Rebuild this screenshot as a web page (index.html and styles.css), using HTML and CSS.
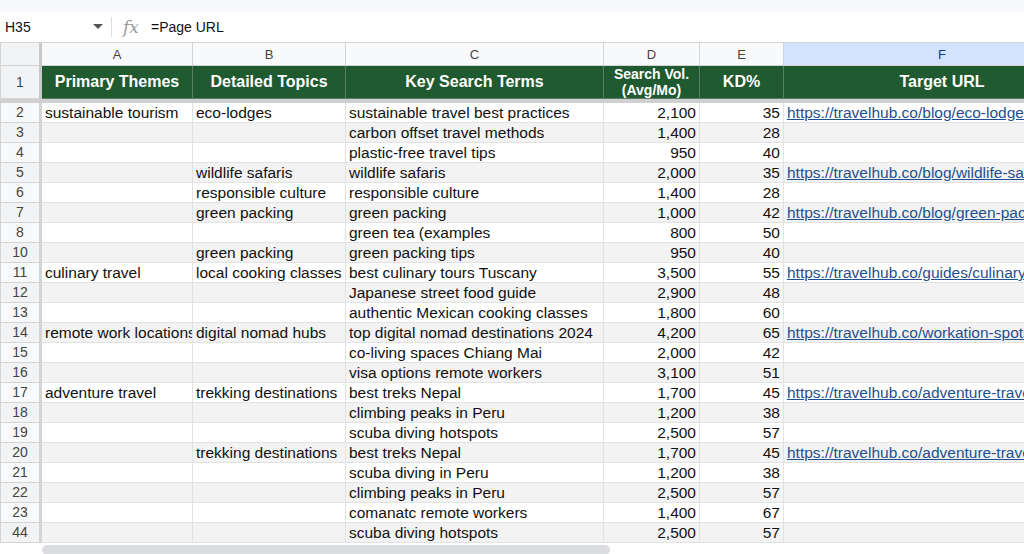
FILE: index.html
```html
<!DOCTYPE html>
<html>
<head>
  <link rel="stylesheet" href="styles.css">
</head>
<body>
  <div class="topstrip"></div>
  <div class="formula-bar">
    <div class="namebox">H35</div>
    <svg class="caret" width="10" height="6" viewBox="0 0 10 6"><path d="M0 0 L10 0 L5 5 Z" fill="#555"/></svg>
    <div class="divider"></div>
    <span class="fx">fx</span>
    <span class="formula">=Page URL</span>
  </div>
  <table class="sheet">
    <colgroup>
      <col class="c-num"><col class="c-a"><col class="c-b"><col class="c-c"><col class="c-d"><col class="c-e"><col class="c-f">
    </colgroup>
    <tr class="letters">
      <th class="corner"></th><th>A</th><th>B</th><th>C</th><th>D</th><th>E</th><th class="sel">F</th>
    </tr>
    <tr class="head">
      <td class="num">1</td>
      <td>Primary Themes</td>
      <td>Detailed Topics</td>
      <td>Key Search Terms</td>
      <td class="two">Search Vol.<br>(Avg/Mo)</td>
      <td>KD%</td>
      <td>Target URL</td>
    </tr>
  </table>
  <table class="sheet body">
    <colgroup>
      <col class="c-num"><col class="c-a"><col class="c-b"><col class="c-c"><col class="c-d"><col class="c-e"><col class="c-f">
    </colgroup>
    <tbody id="rows"></tbody>
  </table>
  <div class="hscroll"><div class="thumb"></div></div>
  <script type="text/javascript">
    // row number, theme, topic, term, volume, kd, url
    var data = [
      ["2", "sustainable tourism", "eco-lodges", "sustainable travel best practices", "2,100", "35", "https://travelhub.co/blog/eco-lodges-"],
      ["3", "", "", "carbon offset travel methods", "1,400", "28", ""],
      ["4", "", "", "plastic-free travel tips", "950", "40", ""],
      ["5", "", "wildlife safaris", "wildlife safaris", "2,000", "35", "https://travelhub.co/blog/wildlife-safa"],
      ["6", "", "responsible culture", "responsible culture", "1,400", "28", ""],
      ["7", "", "green packing", "green packing", "1,000", "42", "https://travelhub.co/blog/green-packi"],
      ["8", "", "", "green tea (examples", "800", "50", ""],
      ["10", "", "green packing", "green packing tips", "950", "40", ""],
      ["11", "culinary travel", "local cooking classes", "best culinary tours Tuscany", "3,500", "55", "https://travelhub.co/guides/culinary-c"],
      ["12", "", "", "Japanese street food guide", "2,900", "48", ""],
      ["13", "", "", "authentic Mexican cooking classes", "1,800", "60", ""],
      ["14", "remote work locations", "digital nomad hubs", "top digital nomad destinations 2024", "4,200", "65", "https://travelhub.co/workation-spots/"],
      ["15", "", "", "co-living spaces Chiang Mai", "2,000", "42", ""],
      ["16", "", "", "visa options remote workers", "3,100", "51", ""],
      ["17", "adventure travel", "trekking destinations", "best treks Nepal", "1,700", "45", "https://travelhub.co/adventure-travel"],
      ["18", "", "", "climbing peaks in Peru", "1,200", "38", ""],
      ["19", "", "", "scuba diving hotspots", "2,500", "57", ""],
      ["20", "", "trekking destinations", "best treks Nepal", "1,700", "45", "https://travelhub.co/adventure-travel"],
      ["21", "", "", "scuba diving in Peru", "1,200", "38", ""],
      ["22", "", "", "climbing peaks in Peru", "2,500", "57", ""],
      ["23", "", "", "comanatc remote workers", "1,400", "67", ""],
      ["44", "", "", "scuba diving hotspots", "2,500", "57", ""]
    ];

    var tbody = document.getElementById("rows");
    data.forEach(function (r, i) {
      var tr = document.createElement("tr");
      if (i % 2 == 1) tr.className = "band";
      var html = '<td class="num">' + r[0] + '</td>';
      html += '<td class="a">' + r[1] + '</td>';
      html += '<td>' + r[2] + '</td>';
      html += '<td>' + r[3] + '</td>';
      html += '<td class="right">' + r[4] + '</td>';
      html += '<td class="right">' + r[5] + '</td>';
      html += '<td class="link">' + (r[6] ? '<a>' + r[6] + '</a>' : '') + '</td>';
      tr.innerHTML = html;
      tbody.appendChild(tr);
    });
  </script>
</body>
</html>
```

FILE: styles.css
```css
body {
  margin: 0;
  width: 1024px;
  height: 554px;
  overflow: hidden;
  background: #fff;
  font-family: "Liberation Sans", Arial, sans-serif;
  color: #111;
}
.topstrip {
  height: 12px;
  background: #f7f9fc;
}
.formula-bar {
  height: 30px;
  display: flex;
  align-items: center;
  background: #fff;
  border-bottom: 1px solid #d6d6d6;
  font-size: 14px;
}
.namebox {
  width: 88px;
  padding-left: 5px;
}
.divider {
  width: 1px;
  height: 20px;
  background: #ddd;
  margin-left: 8px;
  margin-right: 11px;
}
.fx {
  font-family: "DejaVu Serif", "Liberation Serif", serif;
  font-style: italic;
  color: #9a9a9a;
  font-size: 17px;
  width: 28px;
}
.formula {
  color: #111;
}
.sheet {
  border-collapse: collapse;
  table-layout: fixed;
  width: 1100px;
}
.c-num { width: 40px; }
.c-a { width: 152px; }
.c-b { width: 153px; }
.c-c { width: 258px; }
.c-d { width: 96px; }
.c-e { width: 84px; }
.c-f { width: 317px; }
.letters th {
  height: 22px;
  padding: 0;
  background: #f8f9fa;
  color: #444;
  font-weight: normal;
  font-size: 13px;
  border: 1px solid #d4d4d4;
  border-top: none;
}
.letters th.corner {
  background: #f1f3f4;
  border-right: 3px solid #c9c9c9;
}
.letters th.sel {
  background: #d3e3fd;
  color: #0b3b8c;
}
.head td {
  height: 32px;
  padding: 0;
  background: #1f5a30;
  color: #fff;
  font-weight: bold;
  font-size: 16px;
  line-height: 18px;
  text-align: center;
  border: 1px solid #5c7d64;
}
.head td.two {
  font-size: 14px;
  line-height: 16px;
}
.head td.num {
  background: #f1f3f4;
  color: #444;
  font-weight: normal;
  font-size: 14px;
  border: 1px solid #d4d4d4;
  border-right: 3px solid #c9c9c9;
}
.sheet.body {
  border-top: 4px solid #d0d0d0;
}
.body td {
  height: 19px;
  padding: 0 3px;
  font-size: 15.5px;
  line-height: 19px;
  white-space: nowrap;
  overflow: hidden;
  border: 1px solid #e2e2e2;
  border-top: none;
}
.body td.a {
  padding: 0 0 0 3px;
}
.body tr.band td {
  background: #f3f3f3;
}
.body td.num {
  background: #f8f9fa;
  color: #444;
  font-size: 14px;
  text-align: center;
  border-right: 3px solid #c9c9c9;
  border-color: #d4d4d4;
}
.body tr.band td.num {
  background: #f1f3f4;
}
.body td.right {
  text-align: right;
}
.body td.link a {
  color: #1f4f8f;
  text-decoration: underline;
}
.hscroll {
  height: 10px;
  padding-top: 2px;
  padding-left: 42px;
}
.thumb {
  width: 568px;
  height: 10px;
  background: #dadcdf;
  border-radius: 5px;
}
```
